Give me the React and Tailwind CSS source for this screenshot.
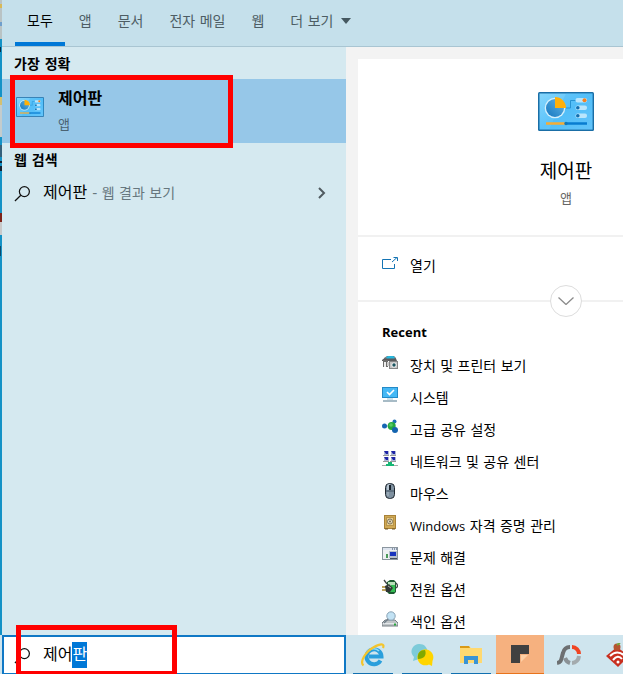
import { useEffect, useRef } from "react";

function DesktopEdge() {
  return (
    <svg className="h-full w-[2px] shrink-0 bg-[#1492c6]" aria-hidden="true">
      <rect width="2" height="39" fill="#b9c3c4" />
      <rect y="4" width="2" height="4" fill="#d8b957" />
      <rect y="22" width="2" height="4" fill="#6f9fcc" />
      <rect y="47" width="1" height="5" fill="#0b2e44" />
      <rect y="97" width="2" height="8" fill="#d3c071" />
      <rect y="105" width="2" height="32" fill="#c3cccd" />
      <rect y="145" width="2" height="12" fill="#35617c" />
      <rect y="161" width="2" height="2" fill="#123" />
      <rect y="166" width="2" height="5" fill="#123" />
      <rect y="213" width="2" height="9" fill="#7e2419" />
      <rect y="222" width="2" height="13" fill="#c9c9c9" />
      <rect y="246" width="1" height="10" fill="#0c4a6b" />
    </svg>
  );
}

function ControlPanelIcon({ className }) {
  return (
    <svg viewBox="0 0 56 39" className={className} aria-hidden="true">
      <defs>
        <linearGradient id="cp-face" x1="0" y1="0" x2="1" y2="1">
          <stop offset="0" stopColor="#85d6fc" />
          <stop offset="0.5" stopColor="#5cc3fa" />
          <stop offset="1" stopColor="#74ccfd" />
        </linearGradient>
        <linearGradient id="cp-pie" x1="0" y1="1" x2="1" y2="0">
          <stop offset="0" stopColor="#1577c0" />
          <stop offset="1" stopColor="#62b5e6" />
        </linearGradient>
      </defs>
      <rect width="56" height="39" rx="1.5" fill="#1a6ea6" />
      <rect x="1.5" y="1.5" width="53" height="36" fill="url(#cp-face)" />
      <path d="M28 1.5H54.5V37.5H11Z" fill="#3db2f5" opacity="0.3" />
      <circle cx="17" cy="16" r="10.3" fill="#d5f0fc" />
      <circle cx="17" cy="16" r="9" fill="url(#cp-pie)" />
      <path d="M17 16V5A11 11 0 0 1 28 16Z" fill="#ffb009" />
      <path d="M28 16h4.5V8.500H38" fill="none" stroke="#2793d2" />
      <rect x="37.500" y="6" width="11.500" height="4.500" rx="2" fill="#b9e5fc" />
      <rect x="37.500" y="13.500" width="11.500" height="4.500" rx="2" fill="#b9e5fc" />
      <rect x="37.500" y="21.500" width="11.500" height="4.500" rx="2" fill="#b9e5fc" />
      <circle cx="46.500" cy="8.200" r="2" fill="#f58220" />
      <circle cx="39.800" cy="15.800" r="1.800" fill="#126fb0" />
      <circle cx="39.800" cy="23.800" r="1.800" fill="#126fb0" />
      <path d="M8 31.500H27" stroke="#f6ac35" strokeWidth="2.500" />
      <path d="M29 31.500H49" stroke="#087cd0" strokeWidth="2.500" />
      <circle cx="28" cy="31.500" r="1.700" fill="#0f78bd" />
    </svg>
  );
}

function MagnifierIcon({ className }) {
  return (
    <svg viewBox="0 0 18 18" className={className} fill="none" stroke="#111" strokeWidth="1.300" aria-hidden="true">
      <circle cx="11" cy="7" r="5.300" />
      <path d="M7.200 10.800 1 17" />
    </svg>
  );
}

const icons = {
  devices: (
    <>
      <path d="M2 3 5 1H12L14 3V5H2Z" fill="#77797b" />
      <path d="M4 2.500 6 1H11L13 2.500 12 4H5Z" fill="#26b7dd" />
      <path d="M0 5 2 3.500H14L15 6H0Z" fill="#5b5b5d" />
      <path d="M1 5H6V12H1Z" fill="#6d6c6b" />
      <path d="M2 7H4V12H2Z" fill="#eee" />
      <path d="M5 7H7V11H5Z" fill="#ccc" />
      <rect x="7.500" y="6.500" width="8" height="7" fill="#c4c4c4" stroke="#858585" />
      <circle cx="12" cy="10" r="2.600" fill="#eee" />
      <circle cx="12" cy="10" r="1.700" fill="#1c5560" />
    </>
  ),
  system: (
    <>
      <rect x="0" y="0" width="16" height="11" fill="#248ac7" />
      <rect x="1" y="1" width="14" height="9" fill="#45b8f5" />
      <path d="m5 5 2.500 2.500L12 3" fill="none" stroke="#fff" strokeWidth="1.600" />
      <path d="M5 12H11" stroke="#9fc4d7" />
      <path d="M1 14H15" stroke="#7896a8" strokeWidth="1.300" />
    </>
  ),
  sharing: (
    <>
      <path d="M2 7H10L12 3M10 7l3 4" stroke="#9abdb0" fill="none" />
      <circle cx="2.500" cy="7" r="2.500" fill="#1766b3" />
      <circle cx="12.500" cy="2.500" r="2" fill="#1b70b6" />
      <circle cx="9.700" cy="7" r="4" fill="#27a940" />
      <circle cx="9" cy="6" r="1.800" fill="#58cb63" />
      <circle cx="13" cy="11" r="3" fill="#1464af" />
    </>
  ),
  network: (
    <>
      {[[2, 0], [9, 0], [2, 6], [9, 6]].map(([x, y]) => (
        <g key={`${x}-${y}`}>
          <rect x={x} y={y} width="5" height="4" fill="#aebbd6" />
          <path d={`M${x} ${y}h4v3h-2z`} fill="#1e23a6" />
          <path d={`M${x - 1} ${y + 4.5}h6`} stroke="#999" />
        </g>
      ))}
      <path d="M6 11H10V13H12V15H4V13H6Z" fill="#16b875" />
      <path d="M0 14.500H4M12 14.500H16" stroke="#aaa" />
    </>
  ),
  mouse: (
    <>
      <rect x="3.500" y="0.500" width="9" height="15" rx="4" fill="#7f91a0" stroke="#202830" />
      <path d="M5 3Q5 1 8 1V7H5Z" fill="#b7c5d1" />
      <path d="M4 8H12" stroke="#455564" />
      <path d="M8 2V7" stroke="#17212b" strokeWidth="2" />
      <path d="M6 9V13" stroke="#acbbc7" />
    </>
  ),
  vault: (
    <>
      <rect x="2.500" y="0.500" width="11" height="13" fill="#d0a955" stroke="#a88238" />
      <rect x="4.500" y="2.500" width="7" height="8" fill="#e6cd8e" stroke="#b9954a" />
      <circle cx="8" cy="6.500" r="2.500" fill="#eee1bd" stroke="#7d735a" />
      <circle cx="8" cy="6.500" r="1" fill="#736b58" />
      <path d="M3 14H6M10 14H13" stroke="#705623" />
    </>
  ),
  trouble: (
    <>
      <rect x="0.500" y="0.500" width="15" height="12" fill="#edf0f2" stroke="#8b969f" />
      <path d="M1 2H15" stroke="#dde4ee" strokeWidth="2" />
      <path d="M10 2H11M12 2H13M14 2H15" stroke="#354968" />
      <rect x="7" y="4" width="8" height="7" fill="#b7c0cc" />
      <path d="M8 5H14V9H8Z" fill="#1934bd" />
      <path d="M4 7H6V11H4Z" fill="#4b9a59" />
      <path d="M8 11.500H15" stroke="#46505c" />
    </>
  ),
  power: (
    <>
      <path d="M5 3 8 1H12L14 3V13L12 15H7L5 13Z" fill="#1e5c32" />
      <path d="M6 3H13V6L10 8H6Z" fill="#b9dfb9" />
      <path d="M9 6H13V13H8Z" fill="#35be53" />
      <path d="M2 1 5 5M14 4Q17 7 14 9" fill="none" stroke="#414848" strokeWidth="1.300" />
      <path d="M0 8H4M0 11H4" stroke="#a98729" strokeWidth="1.500" />
      <path d="M3 7 7 5 11 9 8 13H4Z" fill="#303635" />
      <path d="M6 7 9 9" stroke="#a5aba9" />
    </>
  ),
  indexing: (
    <>
      <path d="M3 9H13L16 12V15H0V12Z" fill="#c0c5c8" stroke="#777f84" />
      <path d="M1 12.500H15" stroke="#e4e8ea" />
      <circle cx="9" cy="5" r="4.200" fill="#c2e2f4" stroke="#8aa3b5" />
      <path d="m6 8-4 4" stroke="#707e88" strokeWidth="1.500" />
      <path d="M12 13.500H14" stroke="#29a73b" strokeWidth="2" />
    </>
  ),
};

const recent = [
  ["devices", "장치 및 프린터 보기"],
  ["system", "시스템"],
  ["sharing", "고급 공유 설정"],
  ["network", "네트워크 및 공유 센터"],
  ["mouse", "마우스"],
  [
    "vault",
    <>
      <span className="font-['Open_Sans',sans-serif] text-[13px]">Windows</span> 자격 증명 관리
    </>,
  ],
  ["trouble", "문제 해결"],
  ["power", "전원 옵션"],
  ["indexing", "색인 옵션"],
];

const tabs = ["앱", "문서", "전자 메일", "웹"];

function FilterBar() {
  return (
    <nav className="flex h-[47px] shrink-0 gap-[2px] border-b border-[#a9c5d2] bg-[#c5e0eb] pl-[13px] text-sm text-[#4d5d64]">
      <button className="h-[46px] border-b-4 border-[#0078d7] px-3 pt-1 pb-1 whitespace-nowrap text-black">모두</button>
      {tabs.map((tab) => (
        <button key={tab} className="h-[46px] px-3 pb-1 whitespace-nowrap">
          {tab}
        </button>
      ))}
      <button className="flex h-[46px] items-center gap-2 px-3 pb-1 whitespace-nowrap">
        더 보기
        <svg viewBox="0 0 10 6" className="h-[6px] w-[10px]" aria-hidden="true">
          <path d="M0 0H10L5 6Z" fill="#455860" />
        </svg>
      </button>
    </nav>
  );
}

function Results() {
  return (
    <section className="w-[344px] shrink-0 bg-[#d5e9f0]">
      <h2 className="flex h-8 items-center pt-[2px] pl-3 text-sm font-semibold">가장 정확</h2>
      <div className="relative">
        <button className="flex h-16 w-full items-start gap-[14px] bg-[#96c7e8] pl-[14px] text-left">
          <ControlPanelIcon className="mt-[18px] h-5 w-7" />
          <span className="flex flex-col pt-2">
            <span className="text-base leading-6 font-semibold">제어판</span>
            <span className="pt-[2px] text-[13px] leading-6 text-[#4b6373]">앱</span>
          </span>
        </button>
        <div className="pointer-events-none absolute -top-1 left-2 h-[73px] w-[223px] border-5 border-[#ff0000]" />
      </div>
      <h2 className="flex h-8 items-center pt-[2px] pl-3 text-sm font-semibold">웹 검색</h2>
      <button className="flex h-9 w-full items-center pr-5 pl-3 text-left">
        <MagnifierIcon className="size-[17px]" />
        <span className="ml-3 flex-1 text-base">
          제어판 <span className="text-sm text-[#67777e]">- 웹 결과 보기</span>
        </span>
        <svg viewBox="0 0 8 12" className="h-3 w-2" fill="none" stroke="#505b60" strokeWidth="2" aria-hidden="true">
          <path d="m1 1 5 5-5 5" />
        </svg>
      </button>
    </section>
  );
}

function Details() {
  return (
    <section className="min-w-0 flex-1 overflow-hidden bg-[#f3f3f3] pt-3 pl-3">
      <div className="h-full min-w-[416px] bg-white">
        <header className="flex h-[178px] flex-col items-center border-b-2 border-[#f1f1f1] pt-[33px]">
          <ControlPanelIcon className="h-[39px] w-14" />
          <h1 className="mt-6 text-[19px] leading-8">제어판</h1>
          <p className="text-[13px] leading-6 text-[#666]">앱</p>
        </header>
        <div className="relative h-[65px] border-b-2 border-[#f1f1f1]">
          <button className="flex h-14 w-full items-center gap-3 pl-6 text-sm">
            <svg viewBox="0 0 16 13" className="mb-1 h-[13px] w-4" fill="none" stroke="#1474b4" aria-hidden="true">
              <path d="M9 2.500H.5V11.500H12.500V7M10 5l5-4.500M11.500.5H15.500V4" />
            </svg>
            <span className="pt-[2px]">열기</span>
          </button>
          <button
            aria-label="더 보기"
            className="absolute top-12 left-1/2 flex size-8 -translate-x-1/2 items-center justify-center rounded-full border border-[#ddd] bg-white"
          >
            <svg viewBox="0 0 16 8" className="h-2 w-4" fill="none" stroke="#8b8b8b" strokeWidth="1.300" aria-hidden="true">
              <path d="m.5.5 7.500 7 7.500-7" />
            </svg>
          </button>
        </div>
        <h2 className="pt-5 pl-6 font-['Open_Sans',sans-serif] text-[13px] leading-5 font-bold">Recent</h2>
        <ul className="pt-[7px]">
          {recent.map(([icon, label]) => (
            <li key={icon}>
              <button className="flex h-8 w-full items-center gap-3 pl-6 text-sm">
                <svg viewBox="0 0 16 16" className="mb-1 size-4" aria-hidden="true">
                  {icons[icon]}
                </svg>
                <span className="pt-[2px]">{label}</span>
              </button>
            </li>
          ))}
        </ul>
      </div>
    </section>
  );
}

function TaskButton({ label, active, running, children }) {
  return (
    <button
      aria-label={label}
      className={`relative flex h-10 w-12 shrink-0 items-center justify-center ${active ? "border-b-2 border-[#e8731c] bg-[#f6b17f]" : ""}`}
    >
      {children}
      {running && <span className="absolute bottom-0 left-1 h-[2px] w-10 bg-[#1170b0]" />}
    </button>
  );
}

function Taskbar() {
  const query = useRef(null);

  useEffect(() => {
    query.current.focus({ preventScroll: true });
    query.current.setSelectionRange(2, 3);
  }, []);

  return (
    <footer className="relative flex h-[39px] shrink-0 bg-[#cfe5ee] pl-[2px]">
      <label className="flex h-10 w-[344px] shrink-0 items-center border-2 border-[#0f78c5] bg-white pl-[10px]">
        <MagnifierIcon className="size-[17px]" />
        <input
          ref={query}
          aria-label="검색"
          defaultValue="제어판"
          className="ml-3 h-[26px] min-w-0 flex-1 text-base leading-[26px] outline-none selection:bg-[#0078d7] selection:text-white"
        />
      </label>
      <div className="pointer-events-none absolute -top-[10px] left-4 h-[51px] w-[161px] border-5 border-[#ff0000]" />
      <div className="flex h-10 min-w-0 flex-1 gap-px overflow-hidden pl-[3px]">
        <TaskButton label="Internet Explorer" running>
          <svg viewBox="0 0 24 24" className="size-6" fill="none" aria-hidden="true">
            <path d="M19.500 17.500A7.500 7.500 0 1 1 20.500 13.500H8" stroke="#2a9fdc" strokeWidth="4" />
            <path d="M18 8A8 8 0 0 0 5 11" stroke="#8fdcf8" strokeWidth="1.500" />
            <path d="M2.500 22.500C-1.500 19 4 9 13 4 19 .5 24 0 22 5" stroke="#f4c52c" strokeWidth="2.200" />
          </svg>
        </TaskButton>
        <TaskButton label="메신저" running>
          <svg viewBox="0 0 24 24" className="size-6" aria-hidden="true">
            <path d="M3 18 4 14A8 7.500 0 1 1 9 16Z" fill="#7dcbd9" />
            <path d="M22 23 19 21.500A8 8 0 1 1 22.500 18Z" fill="#ffd500" />
            <path d="M8 16C7 10 10 7 15 7 17 12 14 16 8 16Z" fill="#82a900" />
          </svg>
        </TaskButton>
        <TaskButton label="파일 탐색기" running>
          <svg viewBox="0 0 22 20" className="h-5 w-[22px]" aria-hidden="true">
            <path d="M0 1H9L11 3H22V18H0Z" fill="#ffd970" />
            <path d="M0 1H9L10 3H0Z" fill="#d99a16" />
            <path d="M4 19V11H18V19H14V15H8V19Z" fill="#3a94d4" />
          </svg>
        </TaskButton>
        <TaskButton label="스티커 메모" active>
          <svg viewBox="0 0 18 18" className="size-[18px]" aria-hidden="true">
            <path d="M0 0H18V9H9V18H0Z" fill="#404040" />
            <path d="M10 10H17L10 17Z" fill="#ffd0a5" />
          </svg>
        </TaskButton>
        <TaskButton label="모니터">
          <svg viewBox="0 0 24 22" className="h-[22px] w-6" fill="none" strokeWidth="4" aria-hidden="true">
            <path d="M0 19C5 18 4 15 6 9 7 5 10 3 13 3" stroke="#6d7072" />
            <path d="M15 3A7 7 0 0 1 22 10" stroke="#f04523" />
            <path d="M22 12A7.500 7.500 0 0 1 15 19" stroke="#a4abae" />
            <path d="M13 19A8 8 0 0 1 8 14" stroke="#8b9296" />
          </svg>
        </TaskButton>
        <TaskButton label="원격 연결">
          <svg viewBox="0 0 24 24" className="size-6" fill="none" aria-hidden="true">
            <path d="M0 13 11 4 23 13 12 24Z" fill="#c82f1f" />
            <circle cx="11" cy="4" r="3.500" fill="#b75430" />
            <path d="M11 2 14 0" stroke="#72a63b" strokeWidth="2" />
            <path d="M4 13Q11 6 19 13M7 17Q12 11 16 16" stroke="#fff" strokeWidth="2" />
            <circle cx="12" cy="19" r="1.500" fill="#fff" />
          </svg>
        </TaskButton>
      </div>
    </footer>
  );
}

export default function App() {
  return (
    <div className="flex h-screen flex-col overflow-hidden bg-[#cfe5ee] font-['DejaVu_Sans','Noto_Sans_CJK_KR',sans-serif] text-black">
      <div className="flex min-h-0 flex-1">
        <DesktopEdge />
        <div className="flex min-w-0 flex-1 flex-col">
          <FilterBar />
          <main className="flex min-h-0 flex-1">
            <Results />
            <Details />
          </main>
        </div>
      </div>
      <Taskbar />
    </div>
  );
}
